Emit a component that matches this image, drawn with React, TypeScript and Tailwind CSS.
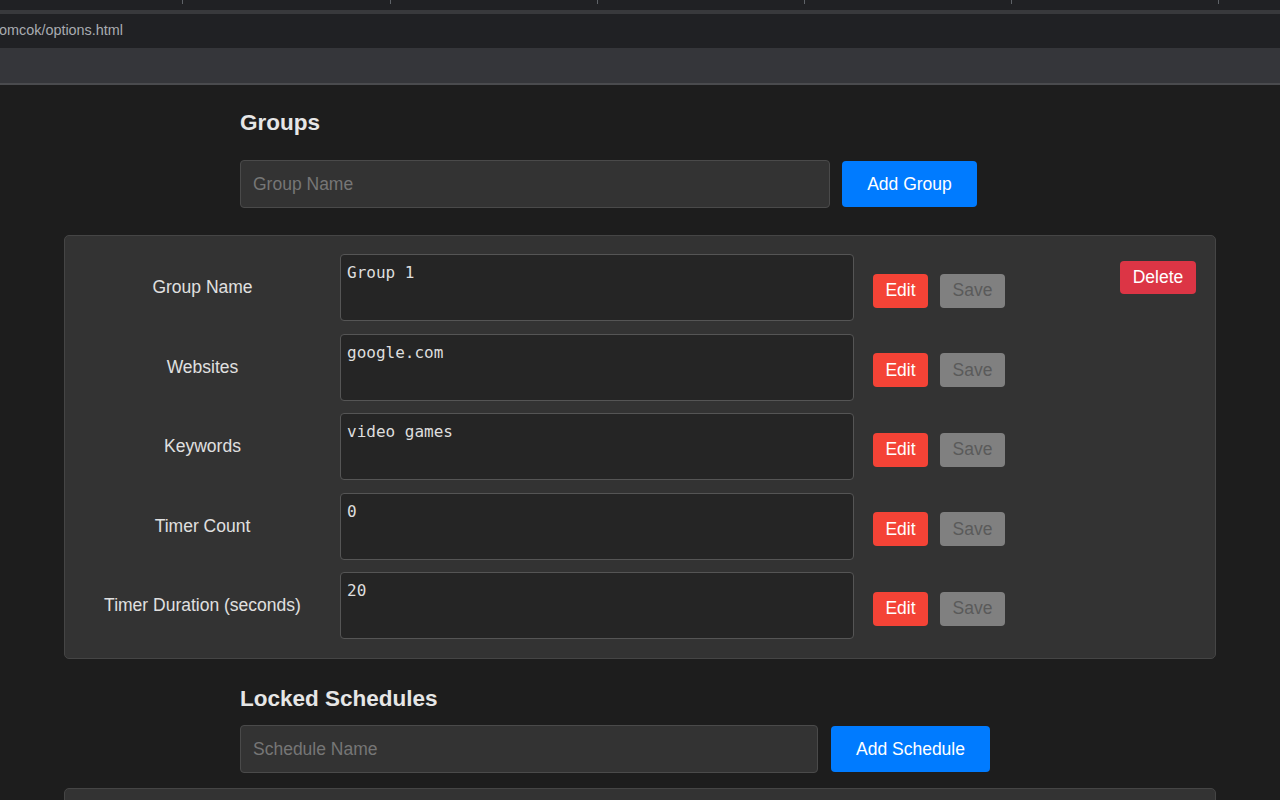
import React from "react";

// Options page for the blocker extension, dark theme

type Row = { label: string; value: string };

const ROWS: Row[] = [
  { label: "Group Name", value: "Group 1" },
  { label: "Websites", value: "google.com" },
  { label: "Keywords", value: "video games" },
  { label: "Timer Count", value: "0" },
  { label: "Timer Duration (seconds)", value: "20" },
];

const TICKS = [182, 390, 597, 804, 1011, 1218];

function BrowserChrome() {
  return (
    <div className="w-full">
      {/* tab strip */}
      <div className="relative h-[10px] bg-[#202124]">
        {TICKS.map((x) => (
          <span
            key={x}
            className="absolute top-0 h-[4px] w-px bg-[#5f6368]"
            style={{ left: x }}
          />
        ))}
      </div>
      <div className="h-[4px] bg-[#38393c]" />
      {/* address row */}
      <div className="flex h-[34px] items-center bg-[#202124]">
        <span className="ml-[-1px] text-[14.4px] text-[#a9acb1] [font-family:'Liberation_Sans',Arial,sans-serif]">
          omcok/options.html
        </span>
      </div>
      {/* toolbar */}
      <div className="h-[35px] bg-[#35363a]" />
      <div className="h-[2px] bg-[#4a4b4e]" />
    </div>
  );
}

function AddForm({
  placeholder,
  button,
  inputWidth,
  buttonWidth,
  gap,
}: {
  placeholder: string;
  button: string;
  inputWidth: string;
  buttonWidth: string;
  gap: string;
}) {
  return (
    <div className="flex items-center">
      <input
        placeholder={placeholder}
        className={`h-[48px] ${inputWidth} rounded-[4px] border border-[#4a4a4a] bg-[#333333] px-[12px] text-[17.5px] text-[#dddddd] outline-none placeholder:text-[#767676]`}
      />
      <button
        className={`${gap} h-[46px] ${buttonWidth} rounded-[4px] bg-[#007bff] text-[17.5px] text-white`}
      >
        {button}
      </button>
    </div>
  );
}

function GroupCard() {
  return (
    <div className="mx-auto mt-[27px] w-[1152px] rounded-[5px] border border-[#454545] bg-[#333333] pt-[18px] pb-[19px] pl-[20px] pr-[19px]">
      <div className="flex flex-col gap-y-[12.5px]">
        {ROWS.map((row, i) => (
          <div key={row.label} className="flex h-[67px]">
            <div className="flex w-[235px] items-center justify-center text-[17.5px] text-[#e0e0e0]">
              {row.label}
            </div>
            <textarea
              defaultValue={row.value}
              className="ml-[20px] h-[67px] w-[514px] resize-none rounded-[4px] border border-[#555555] bg-[#252525] px-[6px] pt-[6px] text-[16px] text-[#dedede] outline-none [font-family:'DejaVu_Sans_Mono',monospace]"
            />
            <div className="ml-[19px] flex items-center gap-[12px] pt-[6px]">
              <button className="h-[34px] w-[55px] rounded-[4px] bg-[#f44336] text-[17.5px] text-white">
                Edit
              </button>
              <button className="h-[34px] w-[65px] rounded-[4px] bg-[#808080] text-[17.5px] text-[#5a5a5a]">
                Save
              </button>
            </div>
            <div className="flex flex-1 justify-end">
              {i === 0 && (
                <button className="mt-[7px] h-[33px] w-[76px] rounded-[4px] bg-[#dc3545] text-[17.5px] text-white">
                  Delete
                </button>
              )}
            </div>
          </div>
        ))}
      </div>
    </div>
  );
}

export default function App() {
  return (
    <div className="min-h-screen w-full overflow-hidden bg-[#1d1d1d] [font-family:'Liberation_Sans',Arial,sans-serif]">
      <BrowserChrome />

      <div className="pt-[25px]">
        <div className="mx-auto w-[800px]">
          <h2 className="text-[22.5px] font-bold leading-[26px] text-[#e6e6e6]">Groups</h2>
          <div className="mt-[24px]">
            <AddForm
              placeholder="Group Name"
              button="Add Group"
              inputWidth="w-[590px]"
              buttonWidth="w-[135px]"
              gap="ml-[12px]"
            />
          </div>
        </div>

        <GroupCard />

        <div className="mx-auto mt-[27px] w-[800px]">
          <h2 className="text-[22.5px] font-bold leading-[26px] text-[#e6e6e6]">
            Locked Schedules
          </h2>
          <div className="mt-[13px]">
            <AddForm
              placeholder="Schedule Name"
              button="Add Schedule"
              inputWidth="w-[578px]"
              buttonWidth="w-[159px]"
              gap="ml-[13px]"
            />
          </div>
        </div>

        <div className="mx-auto mt-[15px] h-[120px] w-[1152px] rounded-[5px] border border-[#454545] bg-[#333333]" />
      </div>
    </div>
  );
}
